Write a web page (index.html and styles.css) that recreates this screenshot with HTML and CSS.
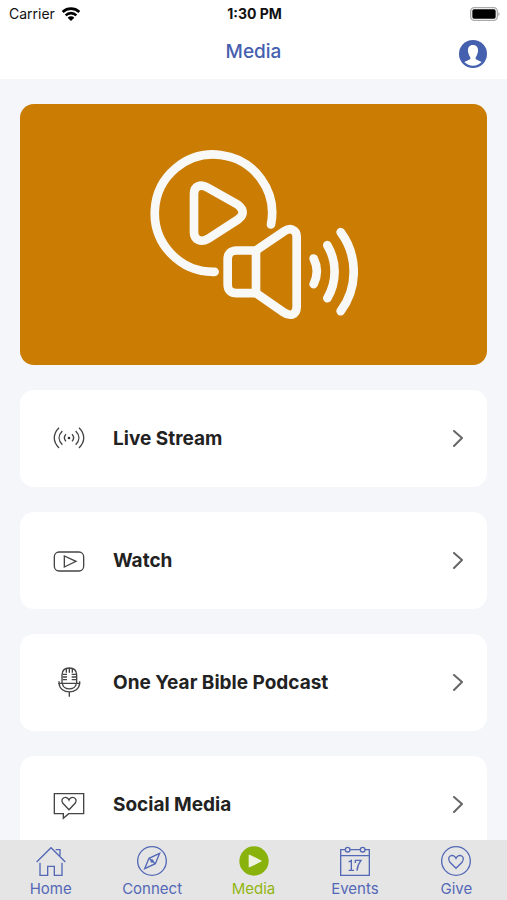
FILE: index.html
```html
<!DOCTYPE html>
<html lang="en">
<head>
<meta charset="utf-8">
<meta name="viewport" content="width=device-width, initial-scale=1">
<title>Media</title>
<link rel="stylesheet" href="styles.css">
</head>
<body>
<div class="app">
  <header class="top">
    <div class="status">
      <div class="carrier">
        <span>Carrier</span>
        <svg class="wifi" viewBox="0 0 54 42" aria-hidden="true"><g fill="none" stroke="#000" stroke-width="8"><path d="M2 15A36 36 0 0 1 52 15"/><path d="M11 25A23 23 0 0 1 43 25"/></g><path d="M17 32a14 14 0 0 1 20 0L27 42z"/></svg>
      </div>
      <span class="time">1:30 PM</span>
      <svg class="battery" viewBox="0 0 90 42" aria-hidden="true"><rect x="2" y="2" width="80" height="38" rx="11" fill="#fff" stroke="#aaa" stroke-width="4"/><rect x="7" y="7" width="70" height="28" rx="5"/><path d="M85 14q8 7 0 14z" fill="#aaa"/></svg>
    </div>
    <div class="nav">
      <h1 class="title">Media</h1>
      <button class="profile" type="button" aria-label="Profile">
        <svg viewBox="0 0 84 84" aria-hidden="true"><circle cx="42" cy="42" r="42" fill="#4560ae"/><path fill="#fff" d="M42 15c-11 0-16 8-15 18 0 4 1 6 2 8 1 6 4 8 5 11v5c-4 4-12 5-18 9 7 7 16 11 26 11s19-4 26-11c-6-4-14-5-18-9v-5c1-3 4-5 5-11 1-2 2-4 2-8 1-10-4-18-15-18z"/></svg>
      </button>
    </div>
  </header>

  <main class="content">
    <div class="hero">
      <svg class="hero-art" viewBox="30 28 624 510" aria-hidden="true">
        <g fill="none" stroke="#f8f8f7" stroke-width="26" stroke-linecap="round" stroke-linejoin="round">
          <path d="M393 253A176 176 0 1 0 224 395"/>
          <path d="M162 161C162 138 182 130 202 142L294 194Q322 216 294 238L204 296C182 309 162 298 162 276Z"/>
          <path d="M348 331H290Q263 331 263 358V432Q263 459 290 459H348Z"/>
          <path d="M348 331L430 275C450 260 470 268 470 290V500C470 525 450 530 430 516L348 459"/>
          <path d="M521 355A87 87 0 0 1 521 432"/>
          <path d="M562 315A156 156 0 0 1 562 474"/>
          <path d="M602 276A199 199 0 0 1 602 513"/>
        </g>
      </svg>
    </div>

    <a class="row" href="#live">
      <svg class="row-icon" viewBox="0 0 96 96" aria-hidden="true"><g class="ink"><path d="M18 14C-1 33-1 56 18 75"/><path d="M78 14C97 33 97 56 78 75"/><path d="M28 24C15 37 15 52 28 65"/><path d="M68 24C81 37 81 52 68 65"/><path d="M39 34Q29 44 39 55"/><path d="M57 34Q67 44 57 55"/></g><circle cx="48" cy="45" r="4" fill="#333"/></svg>
      <span class="row-label">Live Stream</span>
      <svg class="chevron" viewBox="0 0 12 18" aria-hidden="true"><path d="M2 1L10 8L2 16"/></svg>
    </a>
    <a class="row" href="#watch">
      <svg class="row-icon" viewBox="0 0 96 96" aria-hidden="true"><g class="ink"><rect x="4" y="21" width="88" height="57" rx="14"/><path d="M34 33V66L69 49Z"/></g></svg>
      <span class="row-label">Watch</span>
      <svg class="chevron" viewBox="0 0 12 18" aria-hidden="true"><path d="M2 1L10 8L2 16"/></svg>
    </a>
    <a class="row" href="#podcast">
      <svg class="row-icon" viewBox="0 0 96 96" aria-hidden="true"><g class="ink"><path d="M27 50V23Q28 3 49 3T71 23V50"/><path d="M40 4V17M49 3V17M58 4V17M29 22H42M29 30H42M29 38H42M56 22H69M56 30H69M56 38H69"/><path d="M18 43V49H80V43"/><path d="M18 49C20 83 78 83 80 49"/><path d="M28 49C29 71 69 71 70 49"/><path d="M49 75V89"/></g></svg>
      <span class="row-label">One Year Bible Podcast</span>
      <svg class="chevron" viewBox="0 0 12 18" aria-hidden="true"><path d="M2 1L10 8L2 16"/></svg>
    </a>
    <a class="row" href="#social">
      <svg class="row-icon" viewBox="0 0 96 96" aria-hidden="true"><g class="ink"><path d="M4 14H92V74H47L31 88V74H4Z"/><path d="M48 62L29 42C20 28 41 17 48 33C55 17 76 28 67 42Z"/></g></svg>
      <span class="row-label">Social Media</span>
      <svg class="chevron" viewBox="0 0 12 18" aria-hidden="true"><path d="M2 1L10 8L2 16"/></svg>
    </a>
  </main>

  <nav class="tabs" aria-label="Main">
    <a class="tab" href="#home">
      <svg viewBox="0 0 90 90" aria-hidden="true"><path d="M2 48L45 5L88 48M12 50V88H35V61H55V88H78V50M59 11H72V29"/></svg>
      <span>Home</span>
    </a>
    <a class="tab" href="#connect">
      <svg viewBox="0 0 90 90" aria-hidden="true"><circle cx="45" cy="45" r="43"/><path d="M68 22L55 53L23 68L36 37ZM36 37L55 53"/><circle cx="45" cy="45" r="3"/></svg>
      <span>Connect</span>
    </a>
    <a class="tab tab-active" href="#media" aria-current="page">
      <svg viewBox="0 0 90 90" aria-hidden="true"><circle class="disc" cx="45" cy="45" r="44"/><path class="play" d="M31 28V62L66 45Z"/></svg>
      <span>Media</span>
    </a>
    <a class="tab" href="#events">
      <svg viewBox="0 0 90 90" aria-hidden="true"><path d="M16 11H2V88H88V11H75M30 11H60M2 29H88"/><circle cx="23" cy="11" r="7"/><circle cx="68" cy="11" r="7"/><path d="M26 48L34 43V73M26 73H42M46 51V43H63Q52 57 51 74"/></svg>
      <span>Events</span>
    </a>
    <a class="tab" href="#give">
      <svg viewBox="0 0 90 90" aria-hidden="true"><circle cx="45" cy="45" r="43"/><path d="M45 67L27 49C14 31 36 20 45 37C54 20 76 31 63 49Z"/></svg>
      <span>Give</span>
    </a>
  </nav>
</div>
</body>
</html>
```
FILE: styles.css
```css
* {
  box-sizing: border-box;
}

body {
  margin: 0;
  font-family: Inter, "Liberation Sans", sans-serif;
  color: #222;
  background: #f4f6fa;
}

svg {
  display: block;
  flex: none;
}

a {
  color: inherit;
  text-decoration: none;
}

.app {
  display: flex;
  flex-direction: column;
  height: 100vh;
}

.top {
  flex: none;
  background: #fff;
}

.status {
  display: grid;
  grid-template-columns: 1fr auto 1fr;
  align-items: center;
  height: 27px;
  padding: 0 7px 0 9px;
  font-size: 14px;
  color: #111;
}

.carrier {
  display: flex;
  align-items: center;
  gap: 7px;
}

.wifi {
  width: 18px;
  height: 14px;
}

.time {
  font-size: 14px;
  font-weight: 700;
}

.battery {
  width: 30px;
  height: 14px;
  justify-self: end;
}

.nav {
  display: grid;
  grid-template-columns: 1fr auto 1fr;
  align-items: center;
  height: 52px;
  padding: 2px 20px 0;
}

.title {
  grid-column: 2;
  margin: 0;
  padding-bottom: 4px;
  font-size: 19px;
  line-height: 24px;
  font-weight: 500;
  color: #4560ae;
}

.profile {
  justify-self: end;
  padding: 0;
  border: 0;
  background: none;
}

.profile svg {
  width: 28px;
  height: 28px;
}

.content {
  flex: 1;
  min-height: 0;
  overflow: hidden;
  display: flex;
  flex-direction: column;
  gap: 25px;
  padding: 25px 20px;
}

.hero {
  flex: none;
  display: flex;
  align-items: center;
  justify-content: center;
  padding: 45px 0;
  border-radius: 14px;
  background: #cb7c02;
}

.hero-art {
  width: 208px;
  height: 171px;
}

.row {
  flex: none;
  display: flex;
  align-items: center;
  min-height: 97px;
  padding: 0 23px 0 33px;
  border-radius: 14px;
  background: #fff;
}

.row-icon {
  width: 32px;
  height: 32px;
  margin-right: 28px;
}

.ink {
  fill: none;
  stroke: #444;
  stroke-width: 4;
}

.row-label {
  flex: 1;
  font-size: 19px;
  line-height: 24px;
  font-weight: 700;
}

.chevron {
  width: 12px;
  height: 18px;
  fill: none;
  stroke: #666;
  stroke-width: 2;
  stroke-linecap: round;
  stroke-linejoin: round;
}

.tabs {
  flex: none;
  display: flex;
  height: 60px;
  background: #e5e5e5;
}

.tab {
  flex: 1;
  display: flex;
  flex-direction: column;
  align-items: center;
  gap: 4px;
  padding-top: 6px;
  font-size: 15px;
  line-height: 18px;
  color: #5468b6;
}

.tab svg {
  width: 30px;
  height: 30px;
  fill: none;
  stroke: currentColor;
  stroke-width: 4;
}

.tab-active {
  color: #92b512;
}

.tab .disc {
  fill: #8ab20c;
  stroke: none;
}

.tab .play {
  fill: #eef2e0;
  stroke: #eef2e0;
  stroke-linejoin: round;
}
```
